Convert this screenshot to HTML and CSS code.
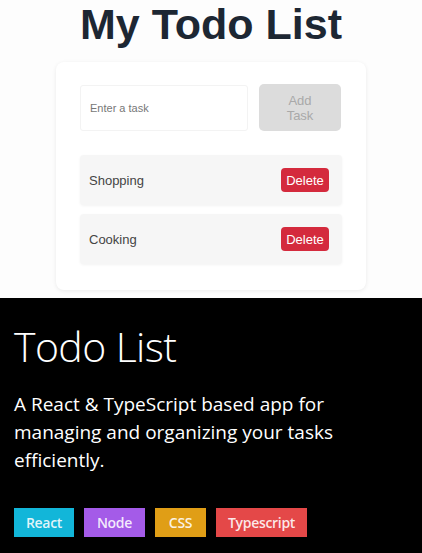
FILE: index.html
```html
<!DOCTYPE html>
<html>
<head>
<meta charset="utf-8">
<link rel="stylesheet" href="styles.css">
</head>
<body>
<section class="app">
  <h1 class="title">My Todo List</h1>
  <div class="card">
    <div class="add-row">
      <input class="task-input" type="text" placeholder="Enter a task">
      <button class="add-btn">Add<br>Task</button>
    </div>
    <ul class="list">
      <li class="item"><span class="item-text">Shopping</span><button class="del-btn">Delete</button></li>
      <li class="item"><span class="item-text">Cooking</span><button class="del-btn">Delete</button></li>
    </ul>
  </div>
</section>
<section class="info">
  <h2 class="info-title">Todo List</h2>
  <p class="info-desc">A React &amp; TypeScript based app for managing and organizing your tasks efficiently.</p>
  <div class="tags">
    <span class="tag tag-react">React</span>
    <span class="tag tag-node">Node</span>
    <span class="tag tag-css">CSS</span>
    <span class="tag tag-ts">Typescript</span>
  </div>
</section>
</body>
</html>
```
FILE: styles.css
```css
* { box-sizing: border-box; }
html, body { margin: 0; padding: 0; }
body { background: #000; font-family: "Liberation Sans", Arial, sans-serif; }

.app {
  background: #fdfdfd;
  height: 298px;
  display: flex;
  flex-direction: column;
  align-items: center;
}
.title {
  margin: 0;
  font-size: 43px;
  line-height: 48px;
  font-weight: 700;
  color: #1d2733;
}
.card {
  margin-top: 14px;
  width: 310px;
  background: #fff;
  border-radius: 8px;
  box-shadow: 0 1px 4px rgba(0,0,0,0.08);
  padding: 22px 24px 26px;
}
.add-row {
  display: flex;
  gap: 11px;
  align-items: center;
}
.task-input {
  width: 168px;
  height: 46px;
  border: 1px solid #f3f3f3;
  border-radius: 3px;
  padding: 0 9px;
  font-family: "Liberation Sans", Arial, sans-serif;
  font-size: 11px;
  color: #555;
  outline: none;
  background: #fff;
}
.task-input::placeholder { color: #777; }
.add-btn {
  width: 82px;
  height: 47px;
  border: none;
  border-radius: 5px;
  background: #dcdcdc;
  color: #a9a9a9;
  font-family: "Liberation Sans", Arial, sans-serif;
  font-size: 13px;
  line-height: 15px;
  padding: 0;
}
.list {
  list-style: none;
  margin: 24px 0 0;
  padding: 0;
  display: flex;
  flex-direction: column;
  gap: 9px;
}
.item {
  display: flex;
  align-items: center;
  justify-content: space-between;
  height: 50px;
  padding: 0 13px 0 9px;
  background: #f6f6f6;
  border-radius: 4px;
  box-shadow: 0 1px 3px rgba(0,0,0,0.05);
}
.item-text {
  font-size: 13px;
  color: #444;
}
.del-btn {
  width: 48px;
  height: 24px;
  border: none;
  border-radius: 4px;
  background: #d42a3d;
  color: #fff;
  font-family: "Liberation Sans", Arial, sans-serif;
  font-size: 13px;
  padding: 0;
}

.info {
  background: #000;
  height: 255px;
  padding: 22px 14px 0;
  color: #fff;
  font-family: "Open Sans", "Noto Sans", sans-serif;
}
.info-title {
  margin: 0;
  font-size: 41px;
  line-height: 52px;
  font-weight: 300;
  letter-spacing: -0.6px;
}
.info-desc {
  margin: 18px 0 0;
  max-width: 370px;
  font-size: 19px;
  line-height: 28px;
}
.tags {
  margin-top: 34px;
  display: flex;
  gap: 10px;
}
.tag {
  display: inline-flex;
  align-items: center;
  justify-content: center;
  height: 29px;
  padding: 0;
  font-size: 14px;
  font-weight: 600;
  letter-spacing: -0.3px;
  color: rgba(255,255,255,0.88);
}
.tag-react { background: #12b6d9; width: 60px; }
.tag-node { background: #a45be8; width: 61px; }
.tag-css { background: #e09e16; width: 51px; }
.tag-ts { background: #e44848; width: 91px; }
```
